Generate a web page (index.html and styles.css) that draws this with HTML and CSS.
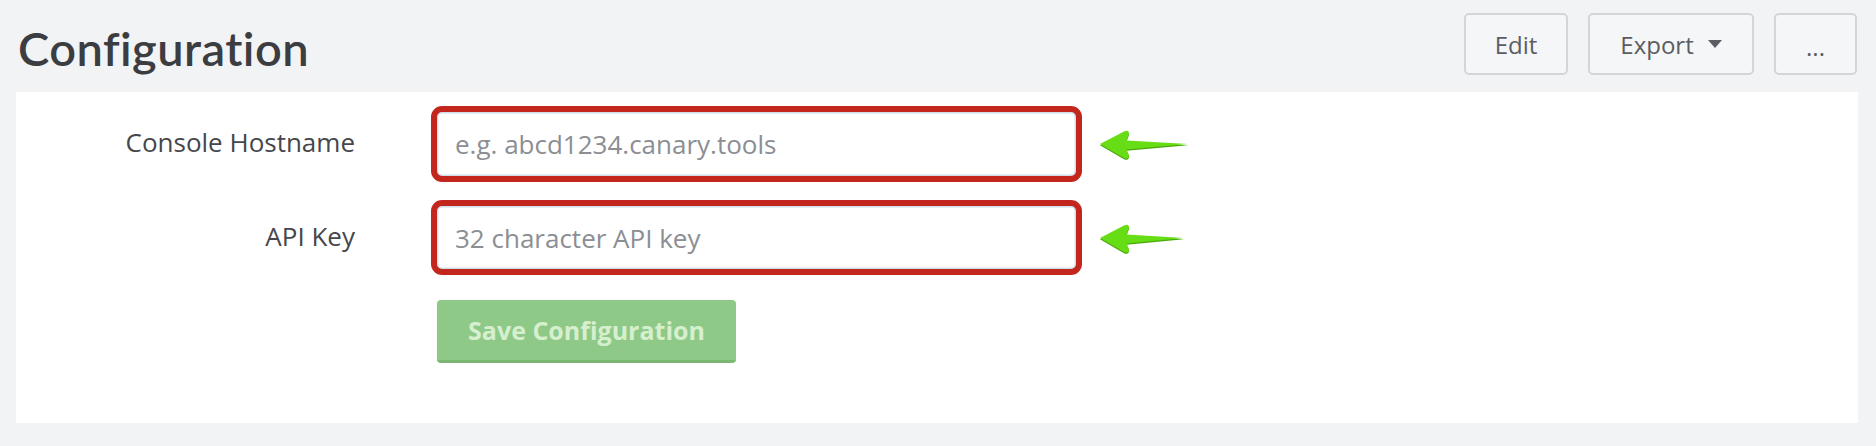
FILE: index.html
```html
<!DOCTYPE html>
<html>
  <head>
    <meta charset="utf-8">
    <title>Configuration</title>
    <link rel="stylesheet" href="styles.css">
  </head>
  <body>
    <div class="header">
      <h1 class="title">Configuration</h1>
      <div class="actions">
        <button class="btn btn-edit">Edit</button>
        <button class="btn btn-export">Export <span class="caret"></span></button>
        <button class="btn btn-more">...</button>
      </div>
    </div>

    <div class="panel">
      <div class="form">
        <label class="label">Console Hostname</label>
        <input class="field" type="text" placeholder="e.g. abcd1234.canary.tools">
        <svg class="arrow" width="92" height="34" viewBox="0 0 92 34">
          <path d="M2 16 L26 3.5 Q31 1 31 6 L28.5 12.5 L90 16 L28.5 21.5 L31 27 Q31 32 26 30 Z" fill="#4aa80a" transform="translate(0 1.2)"/>
          <path d="M2 16 L26 3.5 Q31 1 31 6 L28.5 12.5 L90 16 L28.5 21.5 L31 27 Q31 32 26 30 Z" fill="#66dd14"/>
        </svg>

        <label class="label">API Key</label>
        <input class="field" type="text" placeholder="32 character API key">
        <svg class="arrow" width="92" height="34" viewBox="0 0 92 34">
          <path d="M2 16 L26 3.5 Q31 1 31 6 L28.5 12.5 L86 16 L28.5 21.5 L31 27 Q31 32 26 30 Z" fill="#4aa80a" transform="translate(0 1.2)"/>
          <path d="M2 16 L26 3.5 Q31 1 31 6 L28.5 12.5 L86 16 L28.5 21.5 L31 27 Q31 32 26 30 Z" fill="#66dd14"/>
        </svg>

        <span></span>
        <div class="submit-row">
          <button class="btn-save" disabled>Save Configuration</button>
        </div>
      </div>
    </div>
  </body>
</html>
```

FILE: styles.css
```css
body, html {
    margin: 0;
    padding: 0;
    background: #f2f3f5;
    font-family: "Lato", "Open Sans", sans-serif;
    overflow: hidden;
}
.header {
    display: flex;
    flex-direction: row;
    justify-content: space-between;
    align-items: center;
    height: 92px;
    padding: 0 19px 0 18px;
    box-sizing: border-box;
}
.title {
    margin: 0;
    padding-top: 3px;
    font-size: 47px;
    font-weight: 600;
    color: #3c3d41;
    letter-spacing: 0.45px;
}
.actions {
    display: flex;
    flex-direction: row;
    gap: 20px;
    align-self: flex-start;
    margin-top: 13px;
}
.btn {
    height: 62px;
    background: #f5f6f7;
    border: 2px solid #d3d5d8;
    border-radius: 5px;
    color: #5b5d63;
    font-family: "Open Sans", sans-serif;
    font-size: 24px;
    padding: 0;
    display: flex;
    align-items: center;
    justify-content: center;
}
.btn-edit { width: 104px; }
.btn-export { width: 166px; gap: 14px; }
.btn-more { width: 83px; padding-top: 4px; }
.caret {
    width: 0;
    height: 0;
    border-left: 7px solid transparent;
    border-right: 7px solid transparent;
    border-top: 8px solid #5b5d63;
}
.panel {
    background: #ffffff;
    margin: 0 18px 0 16px;
    height: 331px;
    box-sizing: border-box;
    padding-top: 14px;
}
.form {
    display: grid;
    grid-template-columns: 339px 651px 92px;
    grid-template-rows: 76px 75px 70px;
    column-gap: 76px;
    row-gap: 18px;
    align-items: center;
}
.form > svg.arrow {
    margin-left: -60px;
    margin-top: 2px;
}
.label {
    text-align: right;
    font-family: "Open Sans", sans-serif;
    font-size: 26px;
    color: #45474c;
    margin-top: -4px;
}
.field {
    height: 100%;
    width: 100%;
    box-sizing: border-box;
    border: 6px solid #c3261d;
    border-radius: 11px;
    box-shadow: inset 0 0 0 1.5px #cfe0ea;
    padding: 0 18px;
    font-family: "Open Sans", sans-serif;
    font-size: 26px;
    color: #555;
    outline: none;
}
.field::placeholder {
    color: #8b8e93;
}
.submit-row {
    align-self: end;
    padding-left: 6px;
}
.btn-save {
    display: block;
    width: 299px;
    height: 63px;
    background: #8fc987;
    border: none;
    border-bottom: 3px solid #7bb673;
    border-radius: 4px;
    color: #d6efcf;
    font-family: "Open Sans", sans-serif;
    font-size: 25px;
    font-weight: 700;
    padding: 0;
}
```
